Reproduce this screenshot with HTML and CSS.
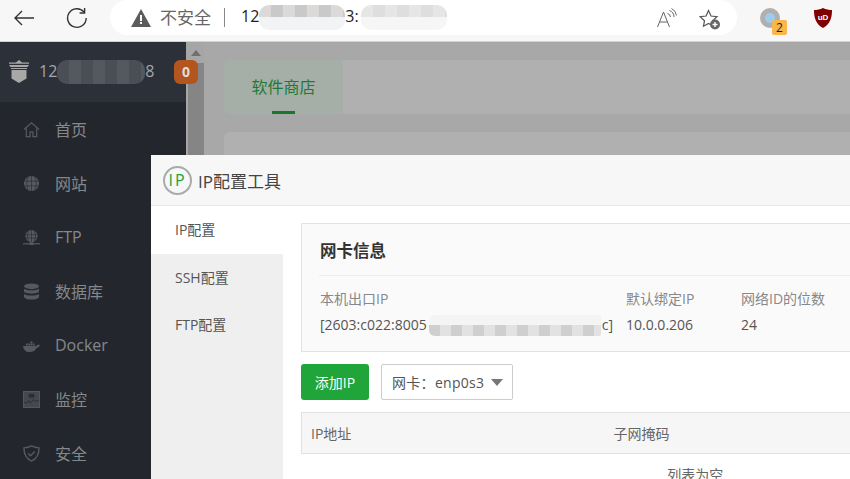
FILE: index.html
```html
<!DOCTYPE html>
<html lang="zh-CN">

<head>
    <meta charset="UTF-8">
    <title>IP配置工具</title>
    <link rel="stylesheet" href="styles.css">
</head>

<body>
    <!-- Browser chrome -->
    <header class="browser-bar">
        <svg class="btn-back" width="20" height="16" viewBox="0 0 20 16" fill="none" stroke="#333" stroke-width="1.4">
            <path d="M20 8H1M8 1L1 8l7 7" />
        </svg>
        <svg class="btn-reload" width="22" height="22" viewBox="0 0 22 22" fill="none" stroke="#333" stroke-width="1.4">
            <path d="M18 5a9.3 9.3 0 1 0 2.2 6" />
            <path d="M18.600 1v5h-5" />
        </svg>
        <div class="address">
            <svg class="warn" width="20" height="18" viewBox="0 0 20 18">
                <path d="M10 0l10 18H0z" fill="#5c5c5c" />
                <rect x="9" y="6" width="2" height="6" fill="#fff" />
                <rect x="9" y="13" width="2" height="2" fill="#fff" />
            </svg>
            <span class="not-secure">不安全</span>
            <span class="addr-sep"></span>
            <span class="addr-text">12<i class="blur blur-url1"></i>3:<i class="blur blur-url2"></i></span>
            <svg class="read-aloud" width="20" height="20" viewBox="0 0 20 20" fill="none" stroke="#666" stroke-width="1">
                <path d="M.5 19L6.500 4l6 15M2.500 14h8" />
                <path d="M10.500 5.500a4 4 0 0 1 3 3.500M12.500 2.500a7 7 0 0 1 4.500 6.500M14.500 .5a9 9 0 0 1 5 7" />
            </svg>
            <svg class="fav" width="22" height="21" viewBox="0 0 22 21">
                <path d="M9.500 1.500l2.500 5.500 6 .7-4.400 4 1 5.500-5.100-2.800-5 2.800 1-5.500-4.400-4 6-.7z" fill="none" stroke="#555" stroke-width="1.200" />
                <circle cx="16" cy="15.500" r="5" fill="#666" />
                <path d="M13.500 15.500h5M16 13v5" stroke="#fff" stroke-width="1.400" />
            </svg>
        </div>
        <div class="ext-wrap">
            <span class="ext-circle"></span>
            <span class="ext-badge">2</span>
        </div>
        <svg class="ublock" width="18" height="20" viewBox="0 0 18 20">
            <path d="M9 0c3 1.500 6 2 9 2 0 8-2 14-9 18C2 16 0 10 0 2c3 0 6-.5 9-2z" fill="#800000" />
            <text x="9" y="11.500" class="ublock-text">uD</text>
        </svg>
    </header>

    <div class="page">
        <!-- Dimmed panel sidebar -->
        <aside class="sidebar">
            <div class="side-head">
                <svg class="side-logo" width="22" height="24" viewBox="0 0 22 24" fill="#a8a8a8">
                    <path d="M11 0l3 2.500h7v1.200H1V2.500h7z" />
                    <path d="M1 5h20l-1.500 2h-17zM3 8h16v1H3z" />
                    <path d="M3.500 10h15v8.500L11 23l-7.500-4.500z" />
                </svg>
                <span class="side-ip">12<i class="blur blur-side"></i>8</span>
                <span class="side-badge">0</span>
            </div>
            <nav class="side-nav">
                <a>
                    <svg viewBox="0 0 18 18" fill="none" stroke="#565a5f" stroke-width="1.300"><path d="M1 9l8-7 8 7M3.500 8v8.500h4v-5h3v5h4V8" /></svg>
                    首页
                </a>
                <a>
                    <svg viewBox="0 0 18 18" fill="#565a5f"><circle cx="9" cy="9" r="8" /><path d="M1 6.500h16M1 11.500h16M9 1v16M5.500 2c-2 4-2 10 0 14M12.500 2c2 4 2 10 0 14" stroke="#2a2e34" stroke-width=".7" fill="none" /></svg>
                    网站
                </a>
                <a>
                    <svg viewBox="0 0 18 18" fill="#565a5f"><circle cx="9" cy="7.500" r="6.500" /><path d="M2.500 6h13M2.500 9.500h13M9 1v13M6 2c-1.500 3-1.500 8 0 11M12 2c1.500 3 1.500 8 0 11" stroke="#2a2e34" stroke-width=".7" fill="none" /><rect y="15" width="18" height="1.300" /><rect x="7" y="14" width="4" height="3" /></svg>
                    FTP
                </a>
                <a>
                    <svg viewBox="0 0 18 18" fill="#565a5f"><ellipse cx="9" cy="3.500" rx="8" ry="3" /><path d="M1 5.500c1 3 15 3 16 0V9c-1 3-15 3-16 0zM1 11c1 3 15 3 16 0v3.500c-1 4-15 4-16 0z" /></svg>
                    数据库
                </a>
                <a>
                    <svg viewBox="0 0 18 18" fill="#565a5f"><path d="M0 9.500h14c.5-1 2-1.500 4-1-1 2-2 3-3.500 3-1 3-4 4.500-7.500 4.500C3 16 .5 13.500 0 9.500z" /><path d="M3 7h2v2H3zM5.500 7h2v2h-2zM8 7h2v2H8zM8 4.500h2v2H8zM10.500 7h2v2h-2z" /></svg>
                    Docker
                </a>
                <a>
                    <svg viewBox="0 0 18 18"><rect x=".5" y=".5" width="17" height="17" fill="#45494e" stroke="#565a5f" /><path d="M1 12l3 1 2-3 2 3 3-4 2 2 4-1" fill="none" stroke="#2a2e34" /><rect x="6" y="3" width="6" height="4" fill="#2a2e34" /></svg>
                    监控
                </a>
                <a>
                    <svg viewBox="0 0 18 18" fill="none" stroke="#565a5f" stroke-width="1.500"><path d="M9 1c2.500 1.300 5 2 8 2 0 7-2 11.500-8 14C3 14.500 1 10 1 3c3 0 5.500-.7 8-2z" /><path d="M5.500 9l2.500 2.500 4.500-4.500" /></svg>
                    安全
                </a>
            </nav>
        </aside>

        <div class="scrollbar">
            <span class="scroll-up"></span>
            <span class="scroll-thumb"></span>
        </div>

        <!-- Dimmed software store page behind the dialog -->
        <main class="store">
            <div class="store-tabs">
                <span class="store-tab">软件商店</span>
            </div>
            <div class="store-card"></div>
        </main>
    </div>

    <!-- IP config dialog -->
    <section class="dialog">
        <div class="dialog-title">
            <span class="dialog-logo">IP</span>
            IP配置工具
        </div>
        <div class="dialog-body">
            <ul class="dialog-menu">
                <li class="active">IP配置</li>
                <li>SSH配置</li>
                <li>FTP配置</li>
            </ul>
            <div class="dialog-content">
                <div class="nic-card">
                    <h3>网卡信息</h3>
                    <div class="nic-grid">
                        <span class="nic-label">本机出口IP</span>
                        <span class="nic-label">默认绑定IP</span>
                        <span class="nic-label">网络ID的位数</span>
                        <span class="nic-value">[2603:c022:8005<i class="blur blur-ip"></i>c]</span>
                        <span class="nic-value">10.0.0.206</span>
                        <span class="nic-value">24</span>
                    </div>
                </div>
                <div class="toolbar">
                    <button class="btn-add">添加IP</button>
                    <div class="nic-select">网卡：enp0s3<span class="caret"></span></div>
                </div>
                <table class="ip-table">
                    <thead>
                        <tr>
                            <th class="col-ip">IP地址</th>
                            <th>子网掩码</th>
                        </tr>
                    </thead>
                    <tbody>
                        <tr>
                            <td colspan="2">列表为空</td>
                        </tr>
                    </tbody>
                </table>
            </div>
        </div>
    </section>
</body>

</html>
```

FILE: styles.css
```css
* {
    box-sizing: border-box;
}

html,
body {
    height: 479px;
    margin: 0;
    overflow: hidden;
}

body {
    position: relative;
    font-family: "Open Sans", "Noto Sans CJK SC", sans-serif;
    font-size: 14px;
    color: #555;
    background: #a8a8a8;
}

/* mosaic patches over hidden addresses */
.blur {
    display: inline-block;
    vertical-align: middle;
    border-radius: 10px;
    background-repeat: no-repeat;
}

.blur-url1 {
    width: 86px;
    height: 25px;
    background-color: #f2f3f4;
    background-image: repeating-linear-gradient(90deg, #dcdad8 0 12px, #c9c9c9 12px 24px);
    background-size: 100% 12px;
}

.blur-url2 {
    width: 86px;
    height: 25px;
    margin-left: 2px;
    background-color: #f6f6f6;
    background-image: repeating-linear-gradient(90deg, #e6e6e6 0 12px, #dedede 12px 24px);
    background-size: 100% 12px;
}

.blur-side {
    width: 88px;
    height: 24px;
    background-color: #4c5057;
    background-image: repeating-linear-gradient(90deg, #4a4e56 0 12px, #55585e 12px 24px);
    background-size: 100% 24px;
}

.blur-ip {
    width: 172px;
    height: 21px;
    margin: -2px 1px 0 2px;
    border-radius: 6px 2px 2px 6px;
    background-color: #f4f4f4;
    background-image: repeating-linear-gradient(90deg, #cfcfcf 0 11px, #e2e2e2 11px 22px);
    background-size: 100% 11px;
    background-position: 0 10px;
}

/* browser bar */
.browser-bar {
    display: flex;
    align-items: flex-start;
    height: 42px;
    background: #f7f7f7;
    border-bottom: 1px solid #d2d2d2;
}

.btn-back {
    flex: none;
    margin: 10px 0 0 14px;
}

.btn-reload {
    flex: none;
    margin: 7px 0 0 32px;
}

.address {
    flex: none;
    display: flex;
    align-items: center;
    width: 627px;
    height: 35px;
    margin-left: 22px;
    padding-left: 21px;
    background: #fff;
    border-radius: 18px;
}

.warn {
    flex: none;
}

.not-secure {
    margin-left: 9px;
    font-size: 17px;
    color: #666;
    line-height: 20px;
}

.addr-sep {
    width: 1px;
    height: 19px;
    margin: 0 16px 0 13px;
    background: #888;
}

.addr-text {
    width: 416px;
    font-size: 16px;
    color: #222;
    white-space: nowrap;
}

.read-aloud {
    flex: none;
    margin-top: 1px;
}

.fav {
    flex: none;
    margin: 3px 0 0 22px;
}

.ext-wrap {
    flex: none;
    position: relative;
    width: 20px;
    height: 20px;
    margin: 8px 0 0 23px;
}

.ext-circle {
    display: block;
    width: 20px;
    height: 20px;
    border-radius: 50%;
    border: 5px solid #b0b0b0;
    background: #9ccdf0;
}

.ext-badge {
    position: absolute;
    left: 12px;
    top: 12px;
    width: 15px;
    height: 15px;
    border-radius: 2px;
    background: #f8b64c;
    color: #222;
    font-size: 12px;
    line-height: 15px;
    text-align: center;
}

.ublock {
    flex: none;
    margin: 8px 0 0 34px;
}

.ublock-text {
    font-family: "Liberation Sans", sans-serif;
    font-size: 8px;
    font-weight: bold;
    fill: #fff;
    text-anchor: middle;
}

/* dimmed page */
.page {
    display: flex;
    height: 437px;
}

.sidebar {
    flex: none;
    width: 186px;
    background: #23272d;
}

.side-head {
    display: flex;
    align-items: center;
    height: 60px;
    padding: 0 0 0 8px;
    background: #2c3038;
    color: #a3a7ab;
}

.side-logo {
    flex: none;
}

.side-ip {
    flex: none;
    width: 135px;
    margin-left: 9px;
    font-size: 16px;
    white-space: nowrap;
}

.side-badge {
    flex: none;
    position: relative;
    z-index: 1;
    width: 24px;
    height: 24px;
    border-radius: 6px;
    background: #b3551e;
    color: #ddd;
    font-size: 14px;
    font-weight: bold;
    line-height: 24px;
    text-align: center;
}

.side-nav a {
    display: flex;
    align-items: center;
    gap: 15px;
    height: 54px;
    padding-left: 23px;
    font-size: 16px;
    color: #84878b;
}

.side-nav svg {
    flex: none;
    width: 17px;
    height: 17px;
}

.scrollbar {
    flex: none;
    display: flex;
    flex-direction: column;
    align-items: flex-end;
    width: 18px;
    background: #a6a6a6;
}

.scroll-up {
    width: 0;
    height: 0;
    margin: 8px 3px 7px 0;
    border-left: 5px solid transparent;
    border-right: 5px solid transparent;
    border-bottom: 6px solid #6f6f6f;
}

.scroll-thumb {
    flex: 1;
    width: 16px;
    background: #858585;
}

.store {
    flex: 1;
    padding: 18px 0 0 20px;
    background: #a8a8a8;
}

.store-tabs {
    height: 54px;
    background: #b0b0b0;
    border-radius: 6px 0 0 6px;
}

.store-tab {
    display: block;
    position: relative;
    width: 119px;
    height: 54px;
    border-radius: 6px 0 0 6px;
    background: #a5aea7;
    color: #1d7a35;
    font-size: 16px;
    line-height: 54px;
    text-align: center;
}

.store-tab::after {
    content: "";
    position: absolute;
    left: 48px;
    bottom: 0;
    width: 23px;
    height: 3px;
    background: #17782c;
}

.store-card {
    height: 300px;
    margin-top: 18px;
    background: #b0b0b0;
    border-radius: 6px 0 0 0;
}

/* dialog */
.dialog {
    position: absolute;
    left: 151px;
    top: 155px;
    width: 938px;
    height: 324px;
    background: #fff;
}

.dialog-title {
    display: flex;
    align-items: center;
    gap: 6px;
    height: 51px;
    padding-left: 12px;
    background: #f7f7f7;
    border-bottom: 1px solid #e8e8e8;
    font-size: 17px;
    color: #444;
}

.dialog-logo {
    width: 29px;
    height: 29px;
    border: 2px solid #aaa;
    border-radius: 50%;
    color: #20a53a;
    font-size: 16px;
    line-height: 25px;
    letter-spacing: 2px;
    text-align: center;
}

.dialog-body {
    display: flex;
    height: 273px;
}

.dialog-menu {
    flex: none;
    width: 132px;
    margin: 0;
    padding: 0;
    list-style: none;
    background: #efefef;
}

.dialog-menu li {
    height: 47.500px;
    padding-left: 24px;
    font-size: 14px;
    line-height: 47px;
    color: #555;
}

.dialog-menu .active {
    background: #fff;
}

.dialog-content {
    flex: 1;
    padding: 17px 0 0 18px;
}

.nic-card {
    height: 129px;
    padding: 0 0 0 17px;
    background: #fafafa;
    border: 1px solid #e2e2e2;
}

.nic-card h3 {
    height: 52px;
    margin: 0;
    padding-left: 1px;
    border-bottom: 1px solid #eee;
    font-size: 16.500px;
    font-weight: bold;
    line-height: 54px;
    color: #333;
}

.nic-grid {
    display: grid;
    grid-template-columns: 306px 115px 1fr;
    grid-auto-rows: 27px;
    padding-top: 9px;
}

.nic-label {
    padding-left: 1px;
    font-size: 14px;
    line-height: 27px;
    color: #888;
    white-space: nowrap;
}

.nic-value {
    padding-left: 1px;
    font-size: 14px;
    line-height: 25px;
    color: #555;
    white-space: nowrap;
}

.toolbar {
    display: flex;
    gap: 12px;
    margin-top: 12px;
}

.btn-add {
    width: 68px;
    height: 36px;
    border: 0;
    border-radius: 3px;
    background: #20a53a;
    color: #fff;
    font-family: inherit;
    font-size: 14px;
}

.nic-select {
    display: flex;
    align-items: center;
    width: 132px;
    height: 36px;
    padding-left: 10px;
    background: #fff;
    border: 1px solid #ccc;
    border-radius: 2px;
    font-size: 14px;
    color: #555;
    letter-spacing: .3px;
}

.caret {
    margin-left: 7px;
    border-left: 6px solid transparent;
    border-right: 6px solid transparent;
    border-top: 7px solid #777;
}

.ip-table {
    width: 788px;
    margin-top: 12px;
    border-collapse: collapse;
    font-size: 14px;
}

.ip-table th {
    height: 41px;
    padding: 0 0 0 9px;
    background: #f6f6f6;
    border: 1px solid #e2e2e2;
    border-width: 1px 0;
    font-weight: normal;
    text-align: left;
    color: #666;
}

.ip-table .col-ip {
    width: 303px;
    border-left: 1px solid #e2e2e2;
}

.ip-table td {
    height: 41px;
    padding-top: 0;
    text-align: center;
    color: #666;
}
```
